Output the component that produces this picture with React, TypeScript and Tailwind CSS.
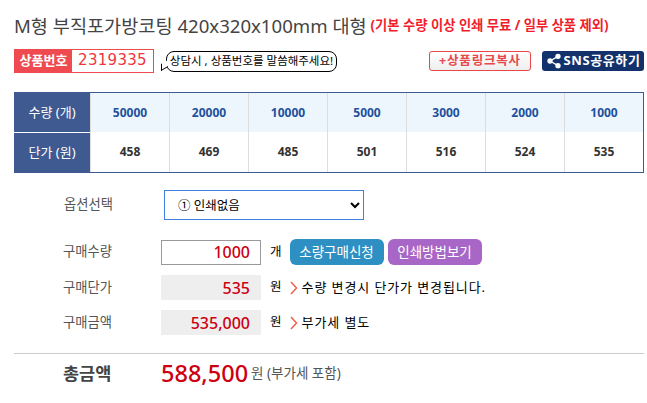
import { Share2 } from 'lucide-react';

const kr = "font-['Noto_Sans','Noto_Sans_CJK_KR',sans-serif]";

const quantities = ['50000', '20000', '10000', '5000', '3000', '2000', '1000'];
const prices = ['458', '469', '485', '501', '516', '524', '535'];

function Chevron() {
  return (
    <svg width="8" height="14" viewBox="0 0 8 14" className="shrink-0">
      <path d="M1 1l5.5 6L1 13" fill="none" stroke="#f0604a" strokeWidth="1.5" />
    </svg>
  );
}

function Row({ label, children }: { label: string; children: React.ReactNode }) {
  return (
    <div className="flex items-center">
      <span className="w-[147px] pl-[49px] text-[13.3px] text-[#555]">{label}</span>
      {children}
    </div>
  );
}

export default function App() {
  return (
    <div className={`w-[647px] h-[403px] overflow-hidden bg-white pl-[14px] pr-[3px] pt-[14px] ${kr}`}>
      {/* Title */}
      <div className="flex items-center h-[24px] whitespace-nowrap">
        <span className="text-[18.6px] text-[#444]">M형 부직포가방코팅 420x320x100mm 대형</span>
        <span className="ml-[4px] text-[13.3px] font-bold text-[#f01e2c]">(기본 수량 이상 인쇄 무료 / 일부 상품 제외)</span>
      </div>

      {/* Product number + actions */}
      <div className="flex items-center mt-[11px] h-[24px]">
        <div className="flex h-[24px] w-[140px] border border-[#ef4a4f]">
          <span className="flex w-[57px] items-center justify-center bg-[#ef4a4f] text-[13px] font-bold text-white">상품번호</span>
          <span className="flex-1 text-center font-['DejaVu_Sans',sans-serif] text-[15px] leading-[21px] tracking-[0.3px] text-[#f0353f]">2319335</span>
        </div>
        <div className="relative ml-[12px] flex h-[21px] w-[171px] items-center justify-center rounded-[8px] border border-black text-[11.5px] text-black">
          <span className="absolute left-[-6px] bottom-[2px] h-[7px] w-[7px] bg-white border-l border-b border-black skew-y-[-30deg]" />
          상담시 , 상품번호를 말씀해주세요!
        </div>
        <div className="ml-auto flex h-[20px] w-[102px] items-center justify-center rounded-[3px] border border-[#e8474c] bg-gradient-to-b from-white to-[#eeeeee] text-[12.5px] font-bold tracking-[0.8px] text-[#e8474c]">
          +상품링크복사
        </div>
        <div className="ml-[11px] flex h-[20px] w-[102px] items-center justify-center gap-[2px] rounded-[3px] bg-[#13326b] text-[13px] font-bold tracking-[0.6px] text-white">
          <Share2 size={16} fill="white" strokeWidth={2} />
          SNS공유하기
        </div>
      </div>

      {/* Price table */}
      <div className="mt-[19px] flex w-[630px] border-y border-[#3e5a90] text-[12px] font-bold">
        <div className="w-[76px] shrink-0 bg-[#3e5a90] text-[13px] font-normal text-white">
          <div className="flex h-[39px] items-center justify-center">수량 (개)</div>
          <div className="flex h-[40px] items-center justify-center border-t border-white">단가 (원)</div>
        </div>
        <div className="grid flex-1 grid-cols-7 border-r border-[#3e5a90]">
          {quantities.map((q) => (
            <div key={q} className="flex h-[39px] items-center justify-center border-l border-[#dddddd] bg-[#edf6fd] text-[#22509c]">{q}</div>
          ))}
          {prices.map((p) => (
            <div key={p} className="flex h-[40px] items-center justify-center border-l border-[#dddddd] text-[#333]">{p}</div>
          ))}
        </div>
      </div>

      {/* Option */}
      <div className="mt-[17px] flex items-center">
        <span className="w-[150px] pl-[50px] text-[13.3px] text-[#555]">옵션선택</span>
        <select className={`h-[30px] w-[200px] border border-[#3f7fe0] bg-white pl-[9px] text-[12.5px] text-black ${kr}`} defaultValue="1">
          <option value="1">① 인쇄없음</option>
        </select>
      </div>

      {/* Purchase rows */}
      <div className="mt-[19px] flex flex-col gap-[10px]">
        <Row label="구매수량">
          <div className="flex h-[25px] w-[100px] items-center justify-end border border-[#999] pr-[10px] text-[16px] font-medium text-[#cc0011]">1000</div>
          <span className="ml-[9px] text-[12.5px] text-black">개</span>
          <span className="ml-[8px] flex h-[26px] w-[94px] items-center justify-center rounded-[6px] bg-[#2e8fc2] text-[13.5px] text-white">소량구매신청</span>
          <span className="ml-[4px] flex h-[26px] w-[94px] items-center justify-center rounded-[6px] bg-[#a867c6] text-[13.5px] text-white">인쇄방법보기</span>
        </Row>
        <Row label="구매단가">
          <div className="flex h-[25px] w-[100px] items-center justify-end bg-[#eeeeee] pr-[11px] text-[16px] font-medium text-[#cc0011]">535</div>
          <span className="ml-[9px] text-[12.5px] text-black">원</span>
          <span className="ml-[8px] mr-[4px]"><Chevron /></span>
          <span className="text-[13px] tracking-[0.9px] text-black">수량 변경시 단가가 변경됩니다.</span>
        </Row>
        <Row label="구매금액">
          <div className="flex h-[25px] w-[100px] items-center justify-end bg-[#eeeeee] pr-[11px] text-[16px] font-medium text-[#cc0011]">535,000</div>
          <span className="ml-[9px] text-[12.5px] text-black">원</span>
          <span className="ml-[8px] mr-[4px]"><Chevron /></span>
          <span className="text-[13px] tracking-[0.9px] text-black">부가세 별도</span>
        </Row>
      </div>

      {/* Total */}
      <div className="mt-[18px] flex h-[40px] w-[630px] items-center border-t border-[#cccccc]">
        <span className="w-[147px] pl-[49px] text-[17.5px] font-bold text-[#444]">총금액</span>
        <span className="text-[23.5px] font-medium text-[#cc0011]">588,500</span>
        <span className="ml-[3px] text-[13.5px] text-[#555]">원 (부가세 포함)</span>
      </div>
    </div>
  );
}
